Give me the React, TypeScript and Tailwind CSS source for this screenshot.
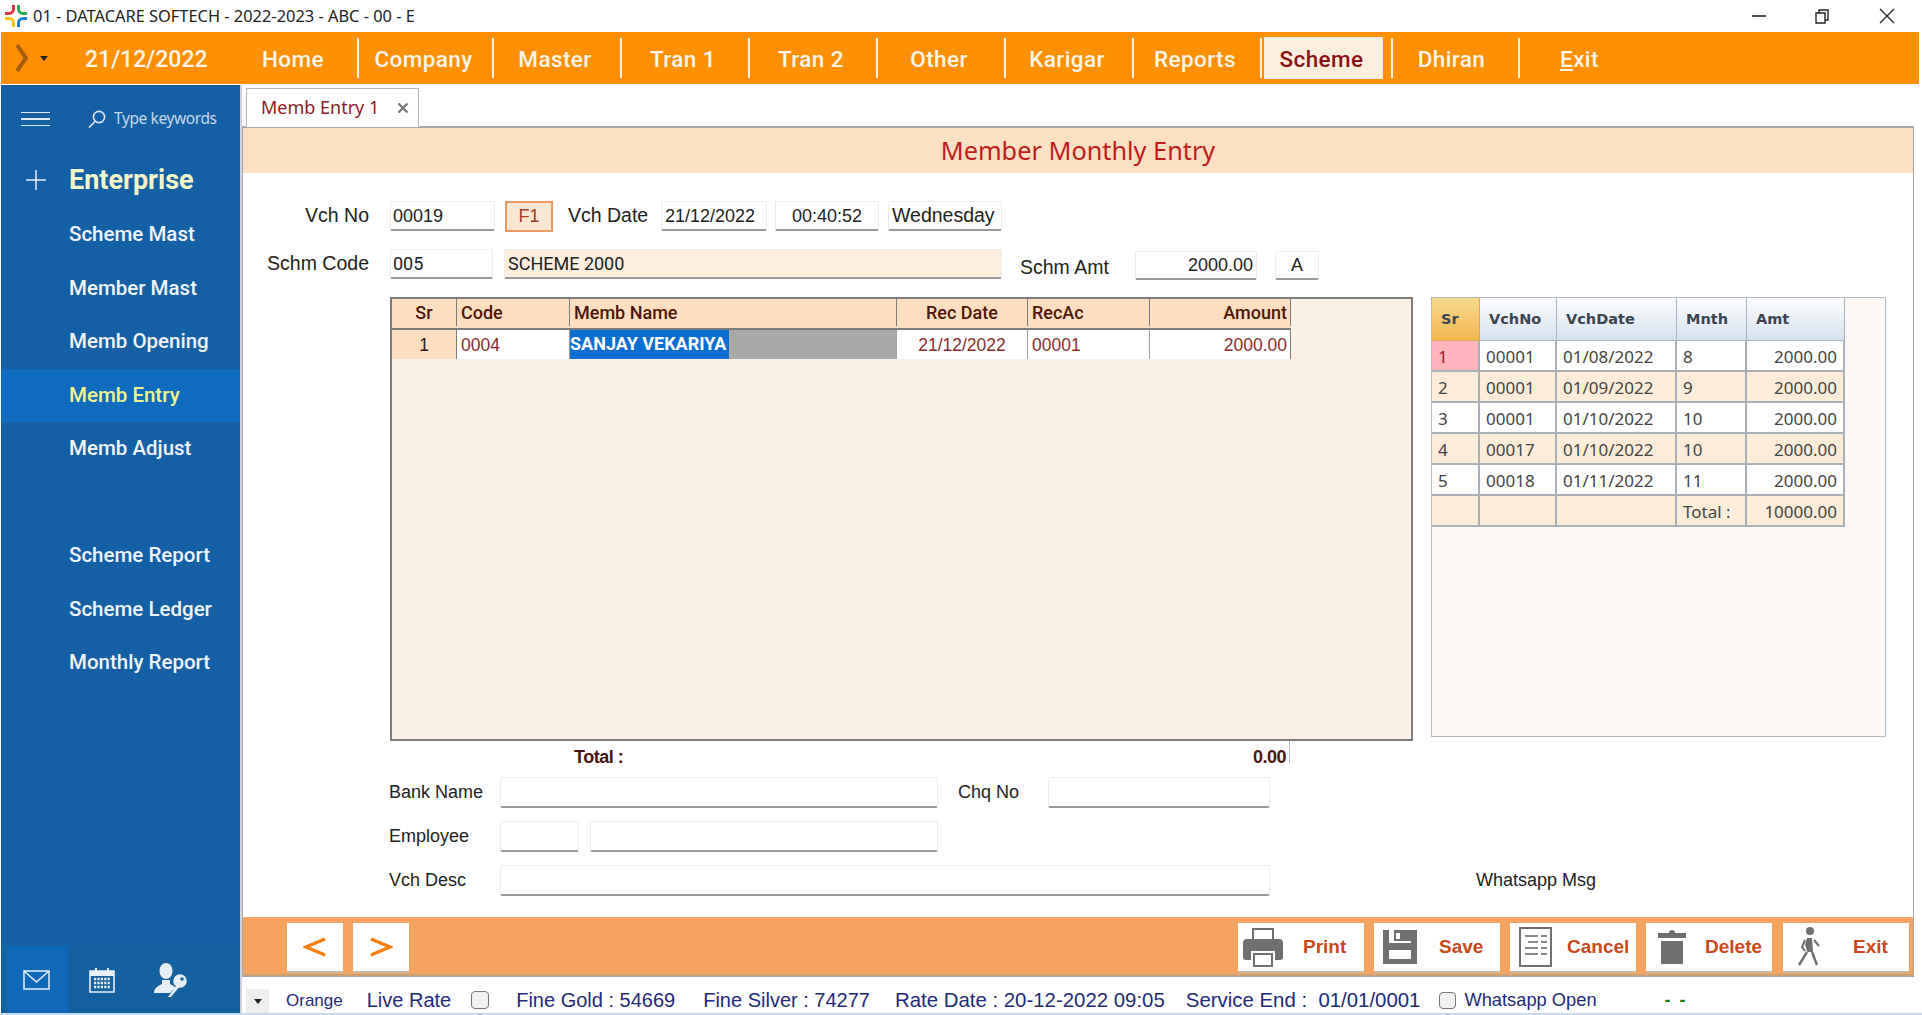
import React from 'react';

const menuItems = [
  { label: 'Home', width: 'w-[126px]' },
  { label: 'Company', width: 'w-[135px]' },
  { label: 'Master', width: 'w-[128px]' },
  { label: 'Tran 1', width: 'w-[128px]' },
  { label: 'Tran 2', width: 'w-[128px]' },
  { label: 'Other', width: 'w-[128px]' },
  { label: 'Karigar', width: 'w-[128px]' },
  { label: 'Reports', width: 'w-[128px]' },
];

const sideItems = ['Scheme Mast', 'Member Mast', 'Memb Opening', 'Memb Entry', 'Memb Adjust', '', 'Scheme Report', 'Scheme Ledger', 'Monthly Report'];

const arial = "font-['Liberation_Sans',Arial,sans-serif]";

const rightRows = [
  ['1', '00001', '01/08/2022', '8', '2000.00'],
  ['2', '00001', '01/09/2022', '9', '2000.00'],
  ['3', '00001', '01/10/2022', '10', '2000.00'],
  ['4', '00017', '01/10/2022', '10', '2000.00'],
  ['5', '00018', '01/11/2022', '11', '2000.00'],
  ['', '', '', 'Total :', '10000.00'],
];

function Field({ className, children }: { className: string; children?: React.ReactNode }) {
  return (
    <div className={`flex items-center shrink-0 rounded-[2px] border border-[#ececec] border-b-2 border-b-[#9a9a9a] text-[18px] leading-none text-[#222] ${className}`}>
      {children}
    </div>
  );
}

function Logo() {
  return (
    <svg viewBox="0 0 24 24" className="w-[24px] h-[24px] shrink-0" fill="none" strokeWidth="3">
      <path d="M1 9.5h4a4.5 4.5 0 0 0 4.5-4.5V1" stroke="#e0323c" />
      <path d="M14.5 1v4a4.5 4.5 0 0 0 4.5 4.5h4" stroke="#2fa84f" />
      <path d="M1 14.5h4A4.5 4.5 0 0 1 9.5 19v4" stroke="#f2c316" />
      <path d="M23 14.5h-4a4.5 4.5 0 0 0-4.5 4.5v4" stroke="#1f7fc4" />
    </svg>
  );
}

function PrintIcon() {
  return (
    <svg viewBox="0 0 40 40" className="w-[40px] h-[40px]">
      <path d="M10 13V2h20v11" fill="none" stroke="#6f6f6f" strokeWidth="2" />
      <path d="M4 12h32a4 4 0 0 1 4 4v14a3 3 0 0 1-3 3h-5v-9H8v9H3a3 3 0 0 1-3-3V16a4 4 0 0 1 4-4z" fill="#6f6f6f" />
      <path d="M11 27h18v12H11z" fill="#fff" stroke="#6f6f6f" strokeWidth="2" />
    </svg>
  );
}

function SaveIcon() {
  return (
    <svg viewBox="0 0 34 34" className="w-[34px] h-[34px]">
      <path d="M0 0h6v13h22V0h6v34H0z" fill="#6f6f6f" />
      <path d="M11 0h17v11H11z" fill="#6f6f6f" />
      <path d="M13 3h4v6h-4z" fill="#fff" />
      <path d="M6 20h22v9H6z" fill="#fff" />
    </svg>
  );
}

function CancelIcon() {
  return (
    <svg viewBox="0 0 33 40" className="w-[33px] h-[40px]">
      <path d="M1 1h31v38H1z" fill="#fff" stroke="#6f6f6f" strokeWidth="2" />
      <path d="M6 9h13M22 9h6M9 15h10M22 15h6M6 21h13M22 21h6M6 27h13M22 27h6" stroke="#8a8a8a" strokeWidth="2.2" />
    </svg>
  );
}

function DeleteIcon() {
  return (
    <svg viewBox="0 0 28 34" className="w-[28px] h-[34px]">
      <path d="M0 3h11a3 3 0 0 1 6 0h11v5H0z" fill="#6f6f6f" />
      <path d="M3 11h22v22a1 1 0 0 1-1 1H4a1 1 0 0 1-1-1z" fill="#6f6f6f" />
    </svg>
  );
}

function WalkIcon() {
  return (
    <svg viewBox="0 0 22 40" className="w-[22px] h-[40px]">
      <circle cx="12" cy="4" r="4" fill="#6f6f6f" />
      <path d="M9 11h5l1 14H9.5L7 18z" fill="#6f6f6f" />
      <path d="M16 13l5 6M7 13l-3 7 3 4" fill="none" stroke="#6f6f6f" strokeWidth="2" />
      <path d="M9 25L1 38M14 25l5 13" fill="none" stroke="#6f6f6f" strokeWidth="2.4" />
    </svg>
  );
}

const actions = [
  { label: 'Print', icon: <PrintIcon />, box: 'ml-[5px] w-[60px]', wrap: 'ml-[5px]' },
  { label: 'Save', icon: <SaveIcon />, box: 'ml-[9px] w-[56px]', wrap: 'ml-[10px]' },
  { label: 'Cancel', icon: <CancelIcon />, box: 'ml-[9px] w-[48px]', wrap: 'ml-[10px]' },
  { label: 'Delete', icon: <DeleteIcon />, box: 'ml-[12px] w-[47px]', wrap: 'ml-[10px]' },
  { label: 'Exit', icon: <WalkIcon />, box: 'ml-[15px] w-[55px]', wrap: 'ml-[11px]' },
];

function ActionButton({ label, icon, box, wrap }: { label: string; icon: React.ReactNode; box: string; wrap: string }) {
  return (
    <div className={`flex items-center w-[126px] h-[50px] bg-white border-b-2 border-b-[#c9b8a8] ${wrap}`}>
      <div className={`flex items-center ${box}`}>{icon}</div>
      <span className={`text-[19px] font-bold text-[#c8481a] ${arial}`}>{label}</span>
    </div>
  );
}

export default function App() {
  return (
    <div className={`w-[1922px] h-[1015px] flex flex-col bg-white overflow-hidden ${arial}`}>
      {/* title bar */}
      <div className="h-8 flex items-center pl-[4px] shrink-0">
        <Logo />
        <span className="ml-[5px] pt-px font-['Noto_Sans',sans-serif] text-[16.4px] text-[#222]">01 - DATACARE SOFTECH - 2022-2023 - ABC - 00 - E</span>
        <div className="ml-auto flex items-center text-[#222]">
          <svg viewBox="0 0 14 14" className="w-[14px] h-[14px]"><path d="M0 7h14" stroke="currentColor" strokeWidth="1.6" /></svg>
          <svg viewBox="0 0 15 15" className="ml-[49px] w-[15px] h-[15px]" fill="none" stroke="currentColor" strokeWidth="1.4"><path d="M1 4h9v10H1zM4 4V1h9v10h-3" /></svg>
          <svg viewBox="0 0 16 16" className="ml-[49px] mr-[27px] w-[16px] h-[16px]" fill="none" stroke="currentColor" strokeWidth="1.3"><path d="M1 1l14 14M15 1L1 15" /></svg>
        </div>
      </div>

      {/* menu bar */}
      <div className="h-[52px] ml-px mr-[3px] flex items-center bg-[#ff9003] shrink-0 font-['Roboto',sans-serif] text-[22.5px] font-medium text-[#fff6e8] tracking-[0.4px]">
        <svg viewBox="0 0 14 28" className="ml-[14px] w-[14px] h-[28px]"><path d="M2 1l9 13-9 13" fill="none" stroke="#a55c0c" strokeWidth="4" /></svg>
        <svg viewBox="0 0 8 5" className="ml-[11px] w-[8px] h-[5px]"><path d="M0 0h8L4 5z" fill="#222" /></svg>
        <span className="ml-[37px] w-[148px] pt-[4px] text-[23px] tracking-normal">21/12/2022</span>
        {menuItems.map((item) => (
          <div key={item.label} className={`h-10 flex items-center justify-center pr-1 pt-[4px] border-r-2 border-[#fff1dc] ${item.width}`}>{item.label}</div>
        ))}
        <div className="ml-[2px] h-[42px] w-[119px] flex items-center justify-center pr-1 pt-[4px] bg-[#fdeedd] text-[#8a1212]">Scheme</div>
        <div className="ml-[8px] h-10 w-[129px] flex items-center justify-center pr-[8px] pt-[4px] border-l-2 border-r-2 border-[#fff1dc]">Dhiran</div>
        <div className="ml-[40px] pt-[4px]"><span className="underline underline-offset-2">E</span>xit</div>
      </div>

      <div className="flex-1 flex min-h-0 mt-px">
        {/* sidebar */}
        <aside className="ml-px w-[241px] flex flex-col bg-[#1560a5] border-r-2 border-[#cdd3dc] shrink-0 font-['Roboto',sans-serif]">
          <div className="h-[68px] flex items-center">
            <div className="ml-[20px] w-[29px] flex flex-col gap-[5px]">
              <div className="h-[1.5px] bg-[#dfe9f3]" />
              <div className="h-[1.5px] bg-[#dfe9f3]" />
              <div className="h-[1.5px] bg-[#dfe9f3]" />
            </div>
            <svg viewBox="0 0 18 18" className="ml-[38px] w-[18px] h-[18px]" fill="none" stroke="#dfe9f3" strokeWidth="1.6"><circle cx="11" cy="7" r="5.6" /><path d="M7 11.5l-6 6" /></svg>
            <span className="ml-[8px] text-[15.5px] text-[#c7d8e8] font-['Noto_Sans',sans-serif] tracking-[-0.4px]">Type keywords</span>
          </div>
          <div className="h-[55px] pb-px flex items-center">
            <svg viewBox="0 0 20 20" className="ml-[25px] w-[20px] h-[20px]"><path d="M10 0v20M0 10h20" stroke="#e6eef6" strokeWidth="1.5" /></svg>
            <span className="ml-[23px] text-[27px] font-bold text-[#f3f6c6] leading-none">Enterprise</span>
          </div>
          {sideItems.map((item, i) => (
            <div key={i} className={`h-[53.5px] flex items-center pl-[68px] text-[20.5px] font-medium ${item === 'Memb Entry' ? 'bg-[#0f6bbd] text-[#f0f58c]' : 'text-[#eef4fa]'}`}>{item}</div>
          ))}
          <div className="mt-auto h-[68px] flex bg-[#15619f] border-t border-[#1b66a8]">
            <div className="ml-[6px] w-[61px] pr-[3px] flex items-center justify-center bg-[#0f68b8]">
              <svg viewBox="0 0 27 20" className="w-[27px] h-[20px]" fill="none" stroke="#e6eef6" strokeWidth="1.5"><path d="M1 1h25v18H1zM1 1l12.5 11L26 1" /></svg>
            </div>
            <div className="ml-[21px] flex items-center">
              <svg viewBox="0 0 26 26" className="w-[26px] h-[26px]"><path d="M1 4h24v21H1z" fill="none" stroke="#e6eef6" strokeWidth="1.6" /><path d="M1 4h24v5H1zM6 1h2v5H6zM18 1h2v5h-2z" fill="#e6eef6" /><path d="M5 12h16M5 16h16M5 20h16" stroke="#e6eef6" strokeWidth="2.4" strokeDasharray="2.2 1.2" /></svg>
            </div>
            <div className="ml-[39px] flex items-center">
              <svg viewBox="0 0 34 34" className="w-[34px] h-[34px]" fill="#e6eef6">
                <ellipse cx="12" cy="8" rx="6.5" ry="8" />
                <path d="M0 30c0-5 4-7 8-9v-4h8v4l6 3-6 6z" />
                <circle cx="26" cy="18" r="7.5" stroke="#15619f" strokeWidth="1.5" />
                <circle cx="28" cy="16" r="1.8" fill="#15619f" />
                <path d="M22 23l-8 11h3l9-11z" />
              </svg>
            </div>
          </div>
        </aside>

        <main className="flex-1 min-w-0 flex flex-col">
          {/* tab strip */}
          <div className="h-[41px] flex items-end pl-[4px] shrink-0">
            <div className="h-[39px] w-[173px] flex items-center pl-[14px] pb-px bg-white border border-b-0 border-[#b4b4b4] relative top-px z-10 font-['Noto_Sans',sans-serif] text-[18px] text-[#8b1a2a]">
              Memb Entry 1
              <svg viewBox="0 0 12 12" className="ml-[18px] w-[12px] h-[12px]"><path d="M1.5 1.5l9 9M10.5 1.5l-9 9" stroke="#777" strokeWidth="2.4" /></svg>
            </div>
          </div>

          {/* panel */}
          <div className="w-[1672px] flex-1 min-h-0 flex flex-col border border-t-2 border-[#a8a8a8]">
            <div className="h-[45px] shrink-0 flex items-center justify-center bg-[#fddfc1] font-['Noto_Sans',sans-serif] text-[25.3px] text-[#c01c1c]">Member Monthly Entry</div>

            <div className="flex-1 min-h-0 pt-[28px] text-[#222]">
              <div className="h-[30px] flex items-center">
                <div className="w-[126px] text-right text-[19.5px]">Vch No</div>
                <Field className="ml-[21px] w-[105px] h-[30px] pl-[2px] bg-white">00019</Field>
                <div className="ml-[10px] w-[48px] h-[31px] flex items-center justify-center bg-[#fbe6d2] border-2 border-[#ea9a5e] text-[18px] text-[#a2401e]">F1</div>
                <div className="ml-[15px] w-[81px] text-[19.5px]">Vch Date</div>
                <Field className="ml-[12px] w-[106px] h-[30px] pl-[3px] bg-white">21/12/2022</Field>
                <Field className="ml-[8px] w-[104px] h-[30px] justify-center bg-white">00:40:52</Field>
                <Field className="ml-[9px] w-[114px] h-[30px] pl-[3px] bg-white text-[19.5px]">Wednesday</Field>
              </div>
              <div className="mt-[18px] h-[31px] flex items-start">
                <div className="w-[126px] text-right text-[19.5px] leading-[28px]">Schm Code</div>
                <Field className="ml-[21px] w-[103px] h-[30px] pl-[2px] bg-white text-[17px] font-['Roboto',sans-serif]">005</Field>
                <Field className="ml-[11px] w-[498px] h-[30px] pl-[3px] bg-[#fdeedd] text-[17px] font-['Roboto',sans-serif]">SCHEME 2000</Field>
                <div className="ml-[18px] w-[91px] text-[19.5px] leading-[36px]">Schm Amt</div>
                <Field className="ml-[24px] mt-[2px] w-[122px] h-[29px] justify-end pr-[3px] bg-white">2000.00</Field>
                <Field className="ml-[18px] mt-[2px] w-[44px] h-[29px] justify-center bg-white text-[17px]">A</Field>
              </div>

              {/* grids */}
              <div className="mt-[17px] flex items-start">
                <div className="ml-[147px] w-[1023px] h-[444px] bg-[#faf0e6] border-2 border-[#7c7c7c] shrink-0">
                  <div className="grid grid-cols-[65px_113px_327px_131px_122px_141px] w-[899px] h-[31px] pb-[2px] bg-[#fddfc0] border-b-2 border-[#7c7c7c] font-['Roboto',sans-serif] text-[18px] font-medium text-[#4e1508]">
                    <div className="flex items-center justify-center border-r border-[#7c7c7c]">Sr</div>
                    <div className="flex items-center pl-[4px] border-r border-[#7c7c7c]">Code</div>
                    <div className="flex items-center pl-[4px] border-r border-[#7c7c7c]">Memb Name</div>
                    <div className="flex items-center justify-center border-r border-[#7c7c7c]">Rec Date</div>
                    <div className="flex items-center pl-[4px] border-r border-[#7c7c7c]">RecAc</div>
                    <div className="flex items-center justify-end pr-[3px] border-r border-[#7c7c7c]">Amount</div>
                  </div>
                  <div className="grid grid-cols-[65px_113px_327px_131px_122px_141px] w-[899px] h-[28px] border-b-2 border-[#7c7c7c] text-[17.5px] text-[#8b2c2c]">
                    <div className="flex items-center justify-center pt-px bg-[#fddfc0] border-r border-[#7c7c7c] text-[#2a1a10]">1</div>
                    <div className="flex items-center pl-[4px] pt-px bg-white border-r border-[#a0a0a0]">0004</div>
                    <div className="flex items-stretch bg-[#a9a9a9] border-r border-[#a0a0a0]">
                      <span className="w-[159px] flex items-center pb-[2px] bg-[#0a6dd0] font-['Roboto',sans-serif] font-bold text-white text-[18px]">SANJAY VEKARIYA</span>
                    </div>
                    <div className="flex items-center justify-center pt-px bg-white border-r border-[#a0a0a0]">21/12/2022</div>
                    <div className="flex items-center pl-[4px] pt-px bg-white border-r border-[#a0a0a0]">00001</div>
                    <div className="flex items-center justify-end pr-[3px] pt-px bg-white border-r border-[#7c7c7c]">2000.00</div>
                  </div>
                </div>

                <div className="ml-[18px] w-[455px] h-[440px] bg-[#fef8f5] border border-[#b0b8c0] shrink-0">
                  <div className="grid grid-cols-[48px_77px_120px_70px_98px] w-[413px] h-[43px] font-['DejaVu_Sans',sans-serif] text-[14.5px] font-bold text-[#3c4450]">
                    <div className="flex items-center pl-[9px] pt-[2px] bg-gradient-to-b from-[#f8d88c] to-[#f0b850] border-r border-b border-[#e0a850]">Sr</div>
                    {['VchNo', 'VchDate', 'Mnth', 'Amt'].map((h) => (
                      <div key={h} className="flex items-center pl-[9px] pt-[2px] bg-gradient-to-b from-[#fdfdfe] to-[#d6e2ee] border-r border-b border-[#a8b6c4]">{h}</div>
                    ))}
                  </div>
                  {rightRows.map((row, r) => (
                    <div key={r} className={`grid grid-cols-[48px_77px_120px_70px_98px] w-[413px] h-[31px] font-['Noto_Sans',sans-serif] text-[17px] text-[#444] ${r % 2 === 0 && r < 5 ? 'bg-white' : 'bg-[#fdecd7]'}`}>
                      {row.map((cell, c) => (
                        <div key={c} className={`flex items-center pt-[3px] border-r-2 border-b-2 border-[#aab0b8] ${c === 4 ? 'justify-end pr-[6px]' : 'pl-[6px]'} ${r === 0 && c === 0 ? 'bg-[#ffb6bd] text-[#a01828]' : ''}`}>{cell}</div>
                      ))}
                    </div>
                  ))}
                </div>
              </div>

              <div className="h-[22px] flex items-center w-[1047px] text-[18px] font-bold text-[#4a1410] tracking-[-0.5px]">
                <span className="ml-[331px] pt-[10px]">Total :</span>
                <span className="ml-auto pr-[3px] pt-[10px] border-r border-[#bbb] h-full flex items-center">0.00</span>
              </div>

              <div className="mt-[14px] h-[31px] flex items-center text-[18px]">
                <div className="ml-[146px] w-[111px]">Bank Name</div>
                <Field className="w-[438px] h-[31px] bg-white" />
                <div className="ml-[20px] w-[90px]">Chq No</div>
                <Field className="w-[222px] h-[31px] bg-white" />
              </div>
              <div className="mt-[13px] h-[31px] flex items-center text-[18px]">
                <div className="ml-[146px] w-[111px]">Employee</div>
                <Field className="w-[79px] h-[31px] bg-white" />
                <Field className="ml-[11px] w-[348px] h-[31px] bg-white" />
              </div>
              <div className="mt-[13px] h-[31px] flex items-center text-[18px]">
                <div className="ml-[146px] w-[111px]">Vch Desc</div>
                <Field className="w-[770px] h-[31px] bg-white" />
                <div className="ml-[206px]">Whatsapp Msg</div>
              </div>
            </div>

            {/* bottom toolbar */}
            <div className="h-[59px] shrink-0 flex items-start pt-[6px] bg-[#f4a460] border-b-2 border-[#c9a078]">
              <div className="ml-[44px] w-[56px] h-[50px] flex items-center justify-center bg-white border-b-2 border-[#c9b8a8]">
                <svg viewBox="0 0 24 20" className="w-[24px] h-[20px]"><path d="M22 2L3 10l19 8" fill="none" stroke="#f87c0e" strokeWidth="3.4" /></svg>
              </div>
              <div className="ml-[10px] w-[56px] h-[50px] flex items-center justify-center bg-white border-b-2 border-[#c9b8a8]">
                <svg viewBox="0 0 24 20" className="w-[24px] h-[20px]"><path d="M2 2l19 8-19 8" fill="none" stroke="#f87c0e" strokeWidth="3.4" /></svg>
              </div>
              <div className="ml-auto flex mr-[4px]">
                {actions.map((a) => (
                  <ActionButton key={a.label} {...a} />
                ))}
              </div>
            </div>
          </div>

          {/* status bar */}
          <div className="h-[36px] shrink-0 pt-[10px] flex items-center text-[20px] text-[#1f2a7a]">
            <div className="ml-[4px] mt-[2px] w-[23px] h-[24px] flex items-center justify-center bg-[#eeeeee]">
              <svg viewBox="0 0 8 5" className="w-[8px] h-[5px]"><path d="M0 0h8L4 5z" fill="#222" /></svg>
            </div>
            <span className="ml-[17px] mt-[2px] text-[17px]">Orange</span>
            <span className="ml-[24px]">Live Rate</span>
            <div className="ml-[20px] w-[18px] h-[18px] rounded-[4px] border border-[#777] bg-[#f0f0f0]" />
            <span className="ml-[27px]">Fine Gold : 54669</span>
            <span className="ml-[28px]">Fine Silver : 74277</span>
            <span className="ml-[25px] text-[20.4px]">Rate Date : 20-12-2022 09:05</span>
            <span className="ml-[21px] text-[20.4px]">Service End :&nbsp; 01/01/0001</span>
            <div className="ml-[19px] w-[17px] h-[17px] rounded-[4px] border border-[#777] bg-[#f0f0f0]" />
            <span className="ml-[8px] text-[18.3px]">Whatsapp Open</span>
            <span className="ml-[68px] text-[18px] font-bold text-[#1a7a1a] tracking-[2px]">- -</span>
          </div>
        </main>
      </div>
      <div className="h-[2px] shrink-0 bg-[#cad9ec]" />
    </div>
  );
}
